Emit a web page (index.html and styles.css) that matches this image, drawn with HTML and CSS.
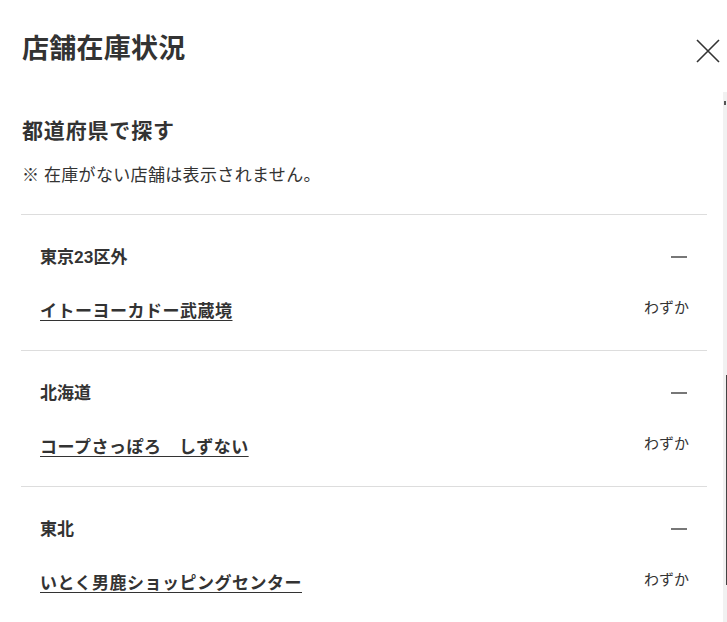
FILE: index.html
```html
<!DOCTYPE html>
<html lang="ja">
<head>
<meta charset="utf-8">
<title>店舗在庫状況</title>
<link rel="stylesheet" href="styles.css">
</head>
<body>
<div class="modal">
  <header class="modal-header">
    <h1 class="modal-title">店舗在庫状況</h1>
    <button class="close-btn" aria-label="閉じる">
      <svg width="24" height="24" viewBox="0 0 24 24"><path d="M1 1 L23 23 M23 1 L1 23" stroke="#333" stroke-width="1.6" fill="none"/></svg>
    </button>
  </header>
  <div class="modal-body">
    <h2 class="sub-title">都道府県で探す</h2>
    <p class="note">※ 在庫がない店舗は表示されません。</p>
    <div class="areas">
      <section class="area">
        <div class="area-head"><span class="area-name">東京23区外</span><span class="minus"></span></div>
        <div class="store"><a class="store-link" href="#">イトーヨーカドー武蔵境</a><span class="stock">わずか</span></div>
      </section>
      <section class="area">
        <div class="area-head"><span class="area-name">北海道</span><span class="minus"></span></div>
        <div class="store"><a class="store-link" href="#">コープさっぽろ　しずない</a><span class="stock">わずか</span></div>
      </section>
      <section class="area">
        <div class="area-head"><span class="area-name">東北</span><span class="minus"></span></div>
        <div class="store"><a class="store-link" href="#">いとく男鹿ショッピングセンター</a><span class="stock">わずか</span></div>
      </section>
    </div>
  </div>
  <div class="scrollbar"><span class="arrow"></span><span class="thumb"></span></div>
</div>
</body>
</html>
```
FILE: styles.css
```css
html, body {
  margin: 0;
  padding: 0;
  background: #fff;
}
body {
  font-family: Roboto, "Noto Sans CJK JP", sans-serif;
  color: #333;
  width: 727px;
  height: 622px;
  overflow: hidden;
}
.modal {
  position: relative;
  height: 622px;
}
.modal-header {
  display: flex;
  justify-content: space-between;
  align-items: center;
  padding: 31px 7px 0 22px;
}
.modal-title {
  margin: 0;
  font-size: 27px;
  line-height: 36px;
  font-weight: 700;
  letter-spacing: 0.01em;
}
.close-btn {
  border: 0;
  background: none;
  padding: 0;
  width: 24px;
  height: 24px;
  display: block;
  cursor: pointer;
  position: relative;
  top: 2px;
}
.close-btn svg { display: block; }
.modal-body {
  padding: 0 20px 0 22px;
}
.sub-title {
  margin: 49px 0 0;
  font-size: 21px;
  line-height: 30px;
  font-weight: 700;
  letter-spacing: 0.04em;
}
.note {
  margin: 17px 0 0;
  font-size: 17px;
  line-height: 24px;
  letter-spacing: 0.02em;
}
.areas {
  margin: 27px 0 0 -1px;
}
.area {
  border-top: 1px solid #ddd;
  padding: 31px 20px 28px 19px;
}
.area:last-child {
  border-bottom: 1px solid #ddd;
}
.area-head {
  display: flex;
  justify-content: space-between;
  align-items: center;
  height: 22px;
}
.area-name {
  font-size: 17px;
  font-weight: 700;
  line-height: 22px;
}
.minus {
  width: 16px;
  height: 2px;
  background: #777;
}
.store {
  display: flex;
  justify-content: space-between;
  align-items: flex-start;
  margin-top: 32px;
  height: 22px;
}
.store-link {
  color: #333;
  font-size: 17px;
  line-height: 22px;
  font-weight: 700;
  letter-spacing: 0.5px;
  text-decoration: underline;
  text-underline-offset: 3px;
}
.stock {
  font-size: 15px;
  line-height: 20px;
  margin-top: -2px;
  margin-right: -2px;
}
.scrollbar {
  position: absolute;
  left: 723px;
  top: 92px;
  width: 4px;
  bottom: 0;
  background: #f1f1f1;
}
.arrow {
  position: absolute;
  left: 1px;
  top: 9px;
  width: 2px;
  height: 4px;
  background: #555;
}
.thumb {
  position: absolute;
  left: 3px;
  top: 283px;
  width: 1px;
  height: 210px;
  background: #444;
}
```
